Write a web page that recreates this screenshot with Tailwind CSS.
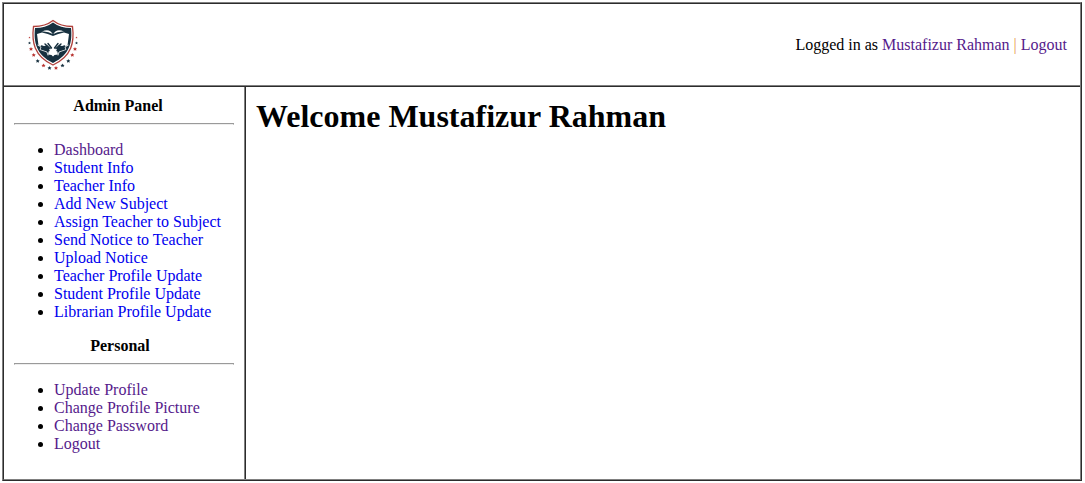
<!DOCTYPE html>
<html lang="en">
<head>
<meta charset="utf-8">
<meta name="viewport" content="width=device-width, initial-scale=1">
<title>Admin Dashboard</title>
<script src="https://cdn.jsdelivr.net/npm/@tailwindcss/browser@4"></script>
</head>
<body class="bg-white text-black text-[16px] leading-[18px] font-['Liberation_Serif','Times_New_Roman',serif]">
<div class="mt-[2px] ml-[2px] mr-[3px] border-2 [border-style:ridge] border-[#808080]">
  <header class="flex items-center justify-between h-[83px] pl-[19px] pr-[13px] border-b-2 [border-bottom-style:ridge] border-[#808080]">
    <svg class="w-[60px] h-[60px]" viewBox="0 0 60 60" role="img" aria-label="School crest">
      <defs><path id="star" d="M0-2L.6-.7L2-.6L1 .4L1.300 1.800L0 1.100L-1.300 1.800L-1 .4L-2-.6L-.6-.7Z"/></defs>
      <path d="M30 5.500C25 9.500 18 11.500 10.500 11.500C8.500 27 11 41 30 50C49 41 51.500 27 49.500 11.500C42 11.500 35 9.500 30 5.500Z" fill="#fff" stroke="#b0413c" stroke-width="1.300"/>
      <path d="M30 7.500C25 11.200 19 13 12 13C10.500 27 13 39.500 30 48C47 39.500 49.500 27 48 13C41 13 35 11.200 30 7.500Z" fill="#17303f"/>
      <path d="M14 19L19 17.500Q25 18.500 30 21Q35 18.500 41 17.500L46 19L44.500 30.500L40 31.500L36 30L33.500 33L35 39.500L31.500 40L30 41.500L28.500 40L25 39.500L26.500 33L24 30L20 31.500L15.500 30.500Z" fill="#fff"/>
      <path d="M19 16.500Q26.500 13 29.700 19Q25 16 19 16.500ZM41 16.500Q33.500 13 30.300 19Q35 16 41 16.500Z" fill="#fff"/>
      <path d="M14.500 30L18 32L17 34.500L24 37L25 40.500M45.500 30L42 32L43 34.500L36 37L35 40.500" fill="none" stroke="#fff" stroke-width=".8"/>
      <g fill="none" stroke="#17303f" stroke-width="1.400" stroke-linecap="round">
        <path d="M18.500 31L24 33M22 29L27 33.500M25 28.500L28.500 33M19 34L26 35.500"/>
        <path d="M41.500 31L36 33M38 29L33 33.500M35 28.500L31.500 33M41 34L34 35.500"/>
      </g>
      <g fill="#b8322e">
        <use href="#star" transform="translate(6.500 22.500) scale(.5)"/>
        <use href="#star" transform="translate(53.500 22.500) scale(.5)"/>
        <use href="#star" x="8" y="34"/>
        <use href="#star" x="52" y="34"/>
        <use href="#star" x="10.700" y="40"/>
        <use href="#star" x="49.300" y="40"/>
        <use href="#star" x="20.500" y="50.500"/>
        <use href="#star" x="33" y="53"/>
      </g>
      <g fill="#17303f">
        <use href="#star" transform="translate(6.500 28) scale(.7)"/>
        <use href="#star" transform="translate(53.500 28) scale(.7)"/>
        <use href="#star" x="14.700" y="46"/>
        <use href="#star" x="45.300" y="46"/>
        <use href="#star" x="26.500" y="53"/>
        <use href="#star" x="39.500" y="50.500"/>
      </g>
    </svg>
    <p>Logged in as <a href="#profile" class="text-[#551a8b]">Mustafizur Rahman</a> <span class="text-[#e69a4c]">|</span> <a href="#logout" class="text-[#551a8b]">Logout</a></p>
  </header>
  <div class="flex">
    <aside class="w-[242px] shrink-0 p-[10px] border-r-2 [border-right-style:ridge] border-[#808080]">
      <nav aria-labelledby="admin-title">
        <h2 id="admin-title" class="text-center font-bold pr-3">Admin Panel</h2>
        <hr class="my-2 h-[2px] border border-[#9a9a9a] border-b-[#eeeeee]">
        <ul class="my-4 pl-10 list-disc whitespace-nowrap text-[#0000ee] marker:text-black">
          <li><a href="#dashboard" class="text-[#551a8b]">Dashboard</a></li>
          <li><a href="#students">Student Info</a></li>
          <li><a href="#teachers">Teacher Info</a></li>
          <li><a href="#subject">Add New Subject</a></li>
          <li><a href="#assign">Assign Teacher to Subject</a></li>
          <li><a href="#send">Send Notice to Teacher</a></li>
          <li><a href="#upload">Upload Notice</a></li>
          <li><a href="#teacher-profile">Teacher Profile Update</a></li>
          <li><a href="#student-profile">Student Profile Update</a></li>
          <li><a href="#librarian-profile">Librarian Profile Update</a></li>
        </ul>
      </nav>
      <nav aria-labelledby="personal-title">
        <h2 id="personal-title" class="text-center font-bold pr-2">Personal</h2>
        <hr class="my-2 h-[2px] border border-[#9a9a9a] border-b-[#eeeeee]">
        <ul class="my-4 pl-10 list-disc whitespace-nowrap text-[#551a8b] marker:text-black">
          <li><a href="#update">Update Profile</a></li>
          <li><a href="#picture">Change Profile Picture</a></li>
          <li><a href="#password">Change Password</a></li>
          <li><a href="#logout">Logout</a></li>
        </ul>
      </nav>
    </aside>
    <main class="grow p-[10px]">
      <h1 class="text-[32px] leading-[38px] font-bold">Welcome Mustafizur Rahman</h1>
    </main>
  </div>
</div>
</body>
</html>
